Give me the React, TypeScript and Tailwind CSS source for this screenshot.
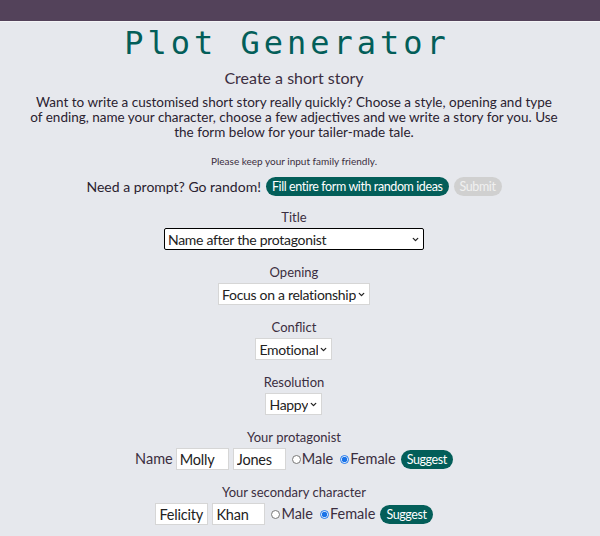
import React from "react"
import { ChevronDown } from "lucide-react"

const body = { fontFamily: "Lato, 'Liberation Sans', sans-serif" }
const field = { fontFamily: "Lato, 'Noto Sans', sans-serif" }

function Radio({ label, checked, name }: { label: string; checked?: boolean; name: string }) {
    return (
        <label className="ml-[2px] mr-[1px] flex items-center text-[14.5px] text-[#3b2e40]">
            <input
                type="radio"
                name={name}
                defaultChecked={checked}
                className="m-0 mr-[1px] h-[9px] w-[9px] accent-[#1a73e8]"
            />
            {label}
        </label>
    )
}

function Pill({ children, muted }: { children: React.ReactNode; muted?: boolean }) {
    return (
        <button
            style={field}
            className={
                muted
                    ? "h-[19px] rounded-full bg-[#d0d0d0] px-[6px] text-[12.5px] leading-[19px] tracking-[-0.4px] text-[#f0f0f0]"
                    : "h-[19px] rounded-full bg-[#035e59] px-[6px] text-[12.5px] leading-[19px] tracking-[-0.4px] text-white"
            }
        >
            {children}
        </button>
    )
}

function Field({ label, value, width, dark }: { label: string; value: string; width?: string; dark?: boolean }) {
    return (
        <div className="flex flex-col items-center">
            <span className="text-[13px] leading-[17px] text-[#3b2e40]">{label}</span>
            <div className="relative mt-[2px] flex">
                <select
                    style={field}
                    defaultValue={value}
                    className={
                        (dark ? "rounded-[2px] border-black " : "border-[#d6d6d6] ") +
                        (width ?? "") +
                        " h-[22px] appearance-none border bg-white pl-[3px] pr-[13px] text-[14px] tracking-[-0.3px] text-[#222]"
                    }
                >
                    <option>{value}</option>
                </select>
                {/* flèche du menu */}
                <ChevronDown
                    size={9}
                    strokeWidth={3.5}
                    className="pointer-events-none absolute right-[4px] top-[7px] text-[#222]"
                />
            </div>
        </div>
    )
}

function NameInput({ value }: { value: string }) {
    return (
        <input
            style={field}
            defaultValue={value}
            className="h-[22px] w-[53px] border border-[#d6d6d6] bg-white px-[3px] text-[14.5px] tracking-[-0.2px] text-[#222]"
        />
    )
}

export default function App() {
    return (
        <div style={body} className="min-h-[536px] bg-[#e6e8ed] text-[#3b2e40]">
            <div className="h-[22px] border-b border-[#f4f4f6] bg-[#53425a]" />

            <div className="mx-auto flex w-[600px] flex-col items-center pr-[12px]">
                <h1
                    style={{ fontFamily: "'DejaVu Sans Mono', monospace" }}
                    className="mr-[14px] mt-[3px] text-[32px] leading-[36px] tracking-[4px] text-[#035e59]"
                >
                    Plot Generator
                </h1>

                <h2 className="mt-[7px] text-[16px] leading-[20px] text-[#3b2e40]">Create a short story</h2>

                <p className="mt-[7px] w-[529px] text-center text-[13.5px] leading-[15px] text-[#2a2230]">
                    Want to write a customised short story really quickly? Choose a style, opening and type of
                    ending, name your character, choose a few adjectives and we write a story for you. Use the
                    form below for your tailer-made tale.
                </p>

                <p className="mt-[14px] text-[10px] leading-[14px] text-[#3b2e40]">
                    Please keep your input family friendly.
                </p>

                <div className="mt-[8px] flex items-center gap-[5px]">
                    <span className="text-[14px] text-[#2a2230]">Need a prompt? Go random!</span>
                    <Pill>Fill entire form with random ideas</Pill>
                    <Pill muted>Submit</Pill>
                </div>

                <div className="mt-[12px] flex flex-col items-center gap-[14px]">
                    <Field label="Title" value="Name after the protagonist" width="w-[260px]" dark />
                    <Field label="Opening" value="Focus on a relationship" />
                    <Field label="Conflict" value="Emotional" />
                    <Field label="Resolution" value="Happy" />

                    <div className="flex flex-col items-center">
                        <span className="text-[13px] leading-[17px]">Your protagonist</span>
                        <div className="mt-[2px] flex items-center gap-[4px]">
                            <span className="mr-[-1px] text-[14.5px]">Name</span>
                            <NameInput value="Molly" />
                            <NameInput value="Jones" />
                            <Radio name="p" label="Male" />
                            <Radio name="p" label="Female" checked />
                            <Pill>Suggest</Pill>
                        </div>
                    </div>

                    <div className="flex flex-col items-center">
                        <span className="text-[13px] leading-[17px]">Your secondary character</span>
                        <div className="mt-[2px] flex items-center gap-[4px]">
                            <NameInput value="Felicity" />
                            <NameInput value="Khan" />
                            <Radio name="s" label="Male" />
                            <Radio name="s" label="Female" checked />
                            <Pill>Suggest</Pill>
                        </div>
                    </div>
                </div>
            </div>
        </div>
    )
}
